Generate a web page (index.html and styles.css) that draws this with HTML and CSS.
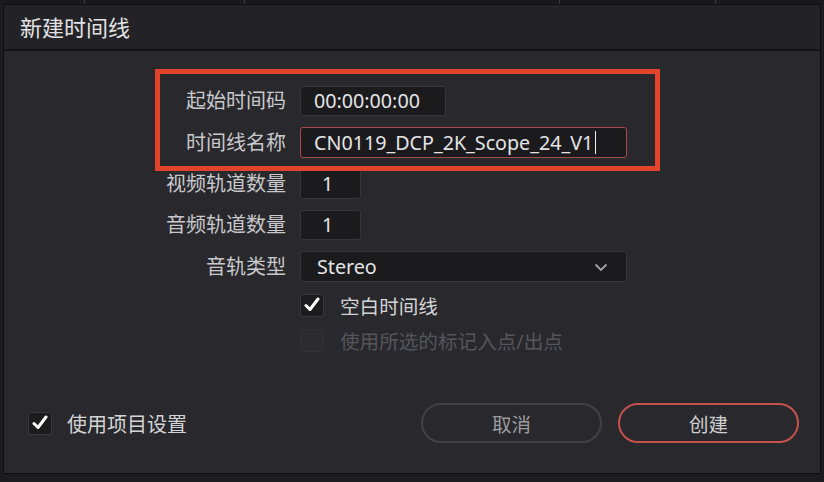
FILE: index.html
```html
<!DOCTYPE html>
<html lang="zh-CN">
<head>
    <meta charset="UTF-8">
    <title>新建时间线</title>
    <link rel="stylesheet" href="styles.css">
</head>
<body>
    <div class="topbar">
        <span class="tick t1"></span>
        <span class="tick t2"></span>
        <span class="tick t3"></span>
        <span class="tick t4"></span>
    </div>
    <div class="dialog">
        <div class="dialog-header">新建时间线</div>

        <div class="dialog-body">
            <div class="form">
                <label class="label">起始时间码</label>
                <div class="field"><div class="input input-tc">00:00:00:00</div></div>

                <label class="label">时间线名称</label>
                <div class="field"><div class="input input-wide input-active">CN0119_DCP_2K_Scope_24_V1<span class="caret"></span></div></div>

                <label class="label">视频轨道数量</label>
                <div class="field"><div class="input input-num">1</div></div>

                <label class="label">音频轨道数量</label>
                <div class="field"><div class="input input-num">1</div></div>

                <label class="label">音轨类型</label>
                <div class="field">
                    <div class="input input-wide select">
                        Stereo
                        <svg class="chevron" width="14" height="9" viewBox="0 0 14 9">
                            <path d="M1.5 1.5 L7 7 L12.5 1.5" fill="none" stroke="#a3a3a6" stroke-width="1.8"/>
                        </svg>
                    </div>
                </div>

                <span></span>
                <div class="check-row">
                    <span class="checkbox checked">
                        <svg width="18" height="16" viewBox="0 0 18 16"><path d="M3 8.5 L7 12.5 L15 2" fill="none" stroke="#fff" stroke-width="3" stroke-linecap="round" stroke-linejoin="round"/></svg>
                    </span>
                    <span class="check-text">空白时间线</span>
                </div>

                <span></span>
                <div class="check-row disabled">
                    <span class="checkbox"></span>
                    <span class="check-text">使用所选的标记入点/出点</span>
                </div>
            </div>

            <div class="footer">
                <div class="check-row">
                    <span class="checkbox checked">
                        <svg width="18" height="16" viewBox="0 0 18 16"><path d="M3 8.5 L7 12.5 L15 2" fill="none" stroke="#fff" stroke-width="3" stroke-linecap="round" stroke-linejoin="round"/></svg>
                    </span>
                    <span class="check-text">使用项目设置</span>
                </div>
                <div class="buttons">
                    <button class="btn">取消</button>
                    <button class="btn btn-primary">创建</button>
                </div>
            </div>
        </div>

        <div class="highlight"></div>
    </div>
</body>
</html>
```

FILE: styles.css
```css
* {
    margin: 0;
    padding: 0;
    box-sizing: border-box;
}

body {
    font-family: "Noto Sans", "Noto Sans CJK SC", sans-serif;
    background: #1c1c1f;
    width: 824px;
    height: 482px;
    overflow: hidden;
    color: #d2d2d4;
}

.topbar {
    height: 4px;
    background: #19191b;
    display: flex;
}

.tick {
    width: 1px;
    height: 4px;
    background: #3a3a3e;
    margin-left: 84px;
}

.t2 { margin-left: 159px; }
.t3 { margin-left: 314px; }
.t4 { margin-left: 155px; }

.dialog {
    position: relative;
    margin: 0 3px 0 3px;
    height: 470px;
    background: #28282d;
    border: 1px solid #0f0f11;
    display: flex;
    flex-direction: column;
}

.dialog-header {
    height: 46px;
    background: #232327;
    border-bottom: 2px solid #141416;
    padding-left: 16px;
    font-size: 22px;
    line-height: 44px;
    color: #e2e2e4;
}

.dialog-body {
    flex: 1;
    display: flex;
    flex-direction: column;
    padding-top: 35px;
}

.form {
    display: grid;
    grid-template-columns: 282px 1fr;
    column-gap: 14px;
    row-gap: 11px;
    align-items: center;
}

.label {
    text-align: right;
    font-size: 20px;
    color: #c9c9cb;
    line-height: 30px;
}

.field {
    display: flex;
}

.input {
    height: 30px;
    background: #1b1b1e;
    border: 1px solid #36363a;
    border-radius: 3px;
    font-size: 19.7px;
    line-height: 28px;
    padding-left: 13px;
    color: #e4e4e6;
    display: flex;
    align-items: center;
}

.input-tc {
    width: 146px;
}

.input-wide {
    width: 327px;
}

.input-active {
    height: 31px;
    border-color: #a8494a;
}

.input-num {
    width: 61px;
    padding-left: 21px;
}

.caret {
    width: 1px;
    height: 23px;
    background: #f0f0f0;
    margin-left: 2px;
}

.select {
    height: 31px;
    padding-left: 16px;
    justify-content: space-between;
    padding-right: 18px;
}

.chevron {
    margin-top: 2px;
}

.check-row {
    display: flex;
    align-items: center;
    height: 24px;
}

.checkbox {
    width: 24px;
    height: 23px;
    border-radius: 3px;
    background: #1c1c1f;
    border: 1px solid #3a3a3e;
    display: flex;
    align-items: center;
    justify-content: center;
}

.check-text {
    margin-left: 16px;
    font-size: 19.6px;
    color: #d4d4d6;
}

.disabled .checkbox {
    background: #2b2b30;
    border-color: #323236;
}

.disabled .check-text {
    color: #56565a;
}

.footer {
    margin-top: auto;
    display: flex;
    align-items: center;
    justify-content: space-between;
    padding: 0 21px 30px 24px;
}

.footer .check-text {
    margin-left: 15px;
    font-size: 20px;
}

.buttons {
    display: flex;
    gap: 16px;
}

.btn {
    width: 181px;
    height: 40px;
    border-radius: 20px;
    background: transparent;
    border: 2px solid #424246;
    color: #9c9c9f;
    font-family: inherit;
    font-size: 19.5px;
}

.btn-primary {
    border-color: #c4514c;
    color: #cfcfd1;
}

.highlight {
    position: absolute;
    left: 151px;
    top: 64px;
    width: 505px;
    height: 102px;
    border: 5px solid #e2432b;
    pointer-events: none;
}
```
